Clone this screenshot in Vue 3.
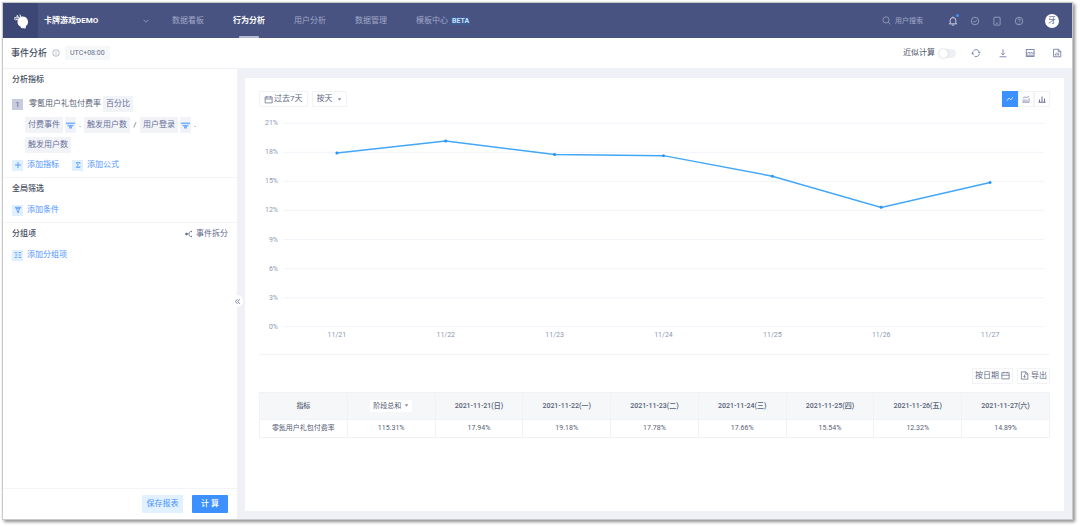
<script setup>
import { ref } from 'vue'

const navItems = [
  { name: '数据看板' },
  { name: '行为分析', active: true },
  { name: '用户分析' },
  { name: '数据管理' },
  { name: '模板中心', badge: 'BETA' },
]
const days = [
  { label: '11/21', date: '2021-11-21(日)', value: 17.94 },
  { label: '11/22', date: '2021-11-22(一)', value: 19.18 },
  { label: '11/23', date: '2021-11-23(二)', value: 17.78 },
  { label: '11/24', date: '2021-11-24(三)', value: 17.66 },
  { label: '11/25', date: '2021-11-25(四)', value: 15.54 },
  { label: '11/26', date: '2021-11-26(五)', value: 12.32 },
  { label: '11/27', date: '2021-11-27(六)', value: 14.89 },
]
const ticks = [21, 18, 15, 12, 9, 6, 3, 0]
const tickY = (v) => 218 - v * 9.7
const points = days.map((d, i) => ({ ...d, x: 78 + i * 109, y: tickY(d.value) }))
const line = points.map((p) => `${p.x},${p.y}`).join(' ')
const approx = ref(false)
</script>

<template>
  <div class="frame">
    <header class="nav">
      <a class="logo" href="#" aria-label="首页">
        <svg viewBox="0 0 32 32" width="16" height="16">
          <path fill="#fff" d="M12 10c3-4 10-4 14-1 4 4 5 9 3 14l-3 3-1 5-9-1-1-3c-4-1-6-5-6-9 0-4 1-6 3-8z" />
          <path fill="none" stroke="#fff" stroke-width="2" d="M3 9l5 1M5 14l5-2M8 4l3 5M14 3l1 5M7 7l5 3M2 12l3 0" />
        </svg>
      </a>
      <label class="project">
        <select aria-label="项目"><option>卡牌游戏DEMO</option></select>
        <svg viewBox="0 0 10 10" width="6" height="6"><path d="M1 3l4 4 4-4" /></svg>
      </label>
      <nav class="menu">
        <a v-for="n in navItems" :key="n.name" href="#" :class="{ active: n.active }">
          {{ n.name }}<span v-if="n.badge" class="beta">{{ n.badge }}</span>
        </a>
      </nav>
      <div class="tools">
        <label class="search">
          <svg viewBox="0 0 16 16" width="9" height="9"><circle cx="7" cy="7" r="5.500" /><path d="M11 11l4 4" /></svg>
          <input type="text" placeholder="用户搜索" aria-label="用户搜索" />
        </label>
        <button class="bell" aria-label="通知">
          <svg viewBox="0 0 16 16" width="10" height="10"><path d="M1.500 12.500h13M3.500 12V7a4.500 4.500 0 0 1 9 0v5M6 14.500h4M8 1v1.500" /></svg>
          <i class="dot"></i>
        </button>
        <button aria-label="任务">
          <svg viewBox="0 0 16 16" width="10" height="10"><circle cx="8" cy="8" r="6" /><path d="M5 8l2.200 2.200L11.300 6" /></svg>
        </button>
        <button aria-label="设备">
          <svg viewBox="0 0 16 16" width="10" height="10"><rect x="3" y="2" width="10" height="12.500" rx="1" /><path d="M6.500 11.500h3" /></svg>
        </button>
        <button aria-label="帮助">
          <svg viewBox="0 0 16 16" width="10" height="10"><circle cx="8" cy="8" r="6" /><path d="M6 6.500a2 2 0 1 1 2.800 1.800q-.8.400-.8 1.200M8 10.800v1.200" /></svg>
        </button>
        <button class="avatar">牙</button>
      </div>
    </header>

    <div class="subbar">
      <h1>事件分析</h1>
      <svg class="info" viewBox="0 0 16 16" width="8" height="8"><circle cx="8" cy="8" r="6.500" /><path d="M8 7v4.500M8 4v1.500" /></svg>
      <span class="zone">UTC+08:00</span>
      <div class="actions">
        <label class="approx">近似计算<input v-model="approx" type="checkbox" /></label>
        <button aria-label="刷新">
          <svg viewBox="0 0 16 16" width="10" height="10"><path d="M4 4.200a5.500 5.500 0 0 1 9.400 3.300M13.400 9.500a5.500 5.500 0 0 1-8 3.600M3.500 11.300a5.500 5.500 0 0 1-.3-6M14.800 6.500l-1.400 1.700-1.700-1.200M1.200 9.500l1.300-1.700 1.600 1.200" /></svg>
        </button>
        <button aria-label="下载">
          <svg viewBox="0 0 16 16" width="10" height="10"><path d="M8 2v9M5.500 8.500L8 11l2.500-2.500M2.500 14h11" /></svg>
        </button>
        <button aria-label="代码">
          <svg viewBox="0 0 16 16" width="10" height="10"><rect x="2" y="2.500" width="12.500" height="11" /><path d="M2 8h3l1.500-1.500L8 9l1.500-2L11 8h3.500M2 11.500h12" /></svg>
        </button>
        <button aria-label="报表">
          <svg viewBox="0 0 16 16" width="10" height="10"><path d="M2.500 2h8L14 5.500V14H2.500zM10 2v4h4M5.500 12V9M8 12V7M10.500 12V8.500" /></svg>
        </button>
      </div>
    </div>

    <div class="body">
      <aside class="panel">
        <section>
          <h2>分析指标</h2>
          <div class="metric">
            <span class="index">1</span>
            <span class="name">零氪用户礼包付费率</span>
            <button class="tag">百分比</button>
          </div>
          <div class="formula">
            <button class="tag">付费事件</button>
            <button class="tag filter" aria-label="筛选付费事件"><svg viewBox="0 0 12 12" width="9" height="9"><path d="M0 2h12v2H0zM1 5h10L8 8v2H4V8z" /></svg></button>
            <span>.</span>
            <button class="tag">触发用户数</button>
            <span class="slash">/</span>
            <button class="tag">用户登录</button>
            <button class="tag filter" aria-label="筛选用户登录"><svg viewBox="0 0 12 12" width="9" height="9"><path d="M0 2h12v2H0zM1 5h10L8 8v2H4V8z" /></svg></button>
            <span>.</span>
            <button class="tag">触发用户数</button>
          </div>
          <div class="adds">
            <button class="add"><i><svg viewBox="0 0 12 12" width="8" height="8"><path d="M6 1.500v9M1.500 6h9" /></svg></i>添加指标</button>
            <button class="add"><i><svg viewBox="0 0 12 12" width="8" height="8"><path d="M9 4V2.500H3.500L6.500 6l-3 3.500H9V8" /></svg></i>添加公式</button>
          </div>
        </section>
        <section>
          <h2>全局筛选</h2>
          <div class="adds">
            <button class="add"><i><svg viewBox="0 0 12 12" width="8" height="8"><path d="M2 2h8L7 6.500V10L5 9V6.500zM3.500 4h5" /></svg></i>添加条件</button>
          </div>
        </section>
        <section>
          <div class="heading">
            <h2>分组项</h2>
            <button class="split">
              <svg viewBox="0 0 16 16" width="8" height="8"><circle class="node" cx="3" cy="8" r="2" /><path d="M5 8h3M14 3h-3Q8 3 8 8t3 5h3M13 1.500v3M13 11.500v3" /></svg>事件拆分
            </button>
          </div>
          <div class="adds">
            <button class="add"><i><svg viewBox="0 0 12 12" width="8" height="8"><path d="M1 2.500h4M7 2.500h4M2 6h3M7 6h3M1 9.500h4M7 9.500h4" /></svg></i>添加分组项</button>
          </div>
        </section>
        <footer>
          <button class="save">保存报表</button>
          <button class="run">计 算</button>
        </footer>
        <button class="collapse" aria-label="收起"><svg viewBox="0 0 12 12" width="7" height="7"><path d="M6 2L2.500 6 6 10M10 2L6.500 6 10 10" /></svg></button>
      </aside>

      <main>
        <div class="card">
          <div class="chart-bar">
            <button class="box">
              <svg viewBox="0 0 16 16" width="9" height="9"><path d="M2 3.500h12.500V14H2zM2 7h12.500M5 1.500v3.500M11.500 1.500v3.500" /></svg>过去7天
            </button>
            <label class="box pick">
              <select aria-label="时间粒度"><option>按天</option></select>
              <svg class="caret" viewBox="0 0 8 8" width="5" height="5"><path d="M1 2h6L4 6z" /></svg>
            </label>
            <div class="views">
              <button class="on" aria-label="折线图"><svg viewBox="0 0 16 16" width="8" height="8"><path d="M1.500 12L6 6l3.500 4L14 4" /></svg></button>
              <button aria-label="堆积图"><svg viewBox="0 0 16 16" width="8" height="8"><path d="M2 14V9M6 14V8M10 14V9M14 14V6M2 6l4-2 4 1 4-3M1 14.500h14" /></svg></button>
              <button aria-label="柱状图"><svg class="bars" viewBox="0 0 16 16" width="8" height="8"><path d="M3 14V9M8 14V3M13 14V7M1 14.500h14" /></svg></button>
            </div>
          </div>

          <svg class="chart" viewBox="0 0 792 232" role="img" aria-label="零氪用户礼包付费率">
            <g v-for="t in ticks" :key="t">
              <line class="grid" x1="24" x2="786" :y1="tickY(t)" :y2="tickY(t)" />
              <text x="19" :y="tickY(t) + 2" text-anchor="end">{{ t }}%</text>
            </g>
            <polyline :points="line" />
            <g v-for="p in points" :key="p.label">
              <circle :cx="p.x" :cy="p.y" r="1.500" />
              <text :x="p.x" y="228" text-anchor="middle">{{ p.label }}</text>
            </g>
          </svg>

          <div class="table-bar">
            <button class="box">
              按日期<svg viewBox="0 0 16 16" width="9" height="9"><path d="M1.500 3h13v11h-13zM1.500 7.500h13M5 1.500V4M11 1.500V4" /></svg>
            </button>
            <button class="box">
              <svg viewBox="0 0 16 16" width="9" height="9"><path d="M2.500 1.500h8L14 5v9.500H2.500zM10 2v3.500h4M8 6.500v5M6 9.500l2 2 2-2" /></svg>导出
            </button>
          </div>

          <table>
            <thead>
              <tr>
                <th>指标</th>
                <th>
                  <label class="pick total">
                    <select aria-label="汇总方式"><option>阶段总和</option></select>
                    <svg class="caret" viewBox="0 0 8 8" width="5" height="5"><path d="M1 2h6L4 6z" /></svg>
                  </label>
                </th>
                <th v-for="d in days" :key="d.date">{{ d.date }}</th>
              </tr>
            </thead>
            <tbody>
              <tr>
                <td>零氪用户礼包付费率</td>
                <td>115.31%</td>
                <td v-for="d in days" :key="d.date">{{ d.value }}%</td>
              </tr>
            </tbody>
          </table>
        </div>
      </main>
    </div>
  </div>
</template>

<style>
body {
  margin: 0;
  background: #fff;
}
</style>

<style scoped>
* {
  box-sizing: border-box;
}
.frame {
  display: flex;
  flex-direction: column;
  min-height: calc(100vh - 11px);
  margin: 3px 8px 8px 3px;
  font-family: Roboto, "Noto Sans CJK SC", sans-serif;
  font-size: 8px;
  line-height: 12px;
  color: #566075;
  background: #fff;
  box-shadow: 0 0 1px 1px #c9cacc, 2px 2px 3px 1px #8c8c8c;
}
button,
input,
select {
  margin: 0;
  padding: 0;
  border: 0;
  background: none;
  color: inherit;
  font: inherit;
  appearance: none;
  outline: none;
}
button {
  display: inline-flex;
  align-items: center;
  justify-content: center;
  white-space: nowrap;
}
a {
  color: inherit;
  text-decoration: none;
}
svg {
  display: block;
  flex: none;
  fill: none;
  stroke: currentColor;
  stroke-width: 1.3;
}
h1,
h2 {
  margin: 0;
  font-weight: 500;
  color: #434c5e;
}
h1 {
  font-size: 9px;
}
h2 {
  font-size: 8px;
}

.nav {
  display: flex;
  align-items: center;
  height: 35px;
  background: #485382;
  color: #a1a8c5;
}
.logo {
  display: flex;
  align-items: center;
  justify-content: center;
  width: 35px;
  height: 35px;
  background: #3d4776;
}
.logo svg {
  stroke: none;
}
.project {
  display: flex;
  align-items: center;
  justify-content: space-between;
  width: 105px;
  margin: 0 23px 0 6px;
}
.project select {
  color: #fff;
  font-weight: 700;
}
.menu {
  display: flex;
  gap: 29px;
  height: 35px;
}
.menu a {
  position: relative;
  display: flex;
  align-items: center;
  white-space: nowrap;
}
.menu .active {
  color: #fff;
  font-weight: 700;
}
.menu .active::after {
  content: "";
  position: absolute;
  bottom: 0;
  left: 6px;
  right: 6px;
  height: 2px;
  border-radius: 1px 1px 0 0;
  background: #b6bad0;
}
.beta {
  margin-left: 3px;
  padding: 0 1px;
  font-size: 7px;
  line-height: 8px;
  font-weight: 700;
  color: #c3e2ff;
  background: #3f5b93;
}
.tools {
  display: flex;
  align-items: center;
  gap: 12px;
  margin-left: auto;
  padding-right: 13px;
}
.search {
  display: flex;
  align-items: center;
  gap: 4px;
}
.search input {
  width: 41px;
  font-size: 7px;
}
.search input::placeholder {
  color: #a1a8c5;
  opacity: 1;
}
.bell {
  position: relative;
  color: #e3e6f2;
}
.dot {
  position: absolute;
  top: -2px;
  right: -1px;
  width: 3px;
  height: 3px;
  border-radius: 50%;
  background: #3d90ff;
}
.avatar {
  width: 14px;
  height: 14px;
  margin-left: 9px;
  border-radius: 50%;
  background: #fff;
  color: #485382;
}

.subbar {
  display: flex;
  align-items: center;
  height: 31px;
  padding: 0 10px 0 8px;
  border-bottom: 1px solid #f0f1f4;
}
.info {
  margin: 0 5px;
  color: #8d95ad;
}
.zone {
  padding: 1px 5px;
  border-radius: 1px;
  background: #f6f7f9;
  font-size: 7px;
  color: #67708a;
}
.actions {
  display: flex;
  align-items: center;
  gap: 17px;
  margin-left: auto;
  color: #69729c;
}
.approx {
  display: flex;
  align-items: center;
  gap: 4px;
  margin-right: -2px;
  color: #4d566b;
}
.approx input {
  display: flex;
  width: 17px;
  height: 9px;
  border-radius: 5px;
  background: #eef0f4;
}
.approx input::before {
  content: "";
  width: 9px;
  height: 9px;
  border-radius: 50%;
  background: #fff;
  box-shadow: 0 0 2px #b5b9c4;
}
.approx input:checked {
  justify-content: flex-end;
  background: #3d90ff;
}

.body {
  display: flex;
  flex: 1;
}
.panel {
  position: relative;
  display: flex;
  flex-direction: column;
  flex: none;
  width: 234px;
}
section {
  padding: 5px 9px 6px;
}
section + section {
  border-top: 1px solid #f3f4f7;
}
.metric {
  display: flex;
  align-items: center;
  margin-top: 10px;
}
.index {
  width: 11px;
  height: 11px;
  margin-right: 6px;
  line-height: 11px;
  text-align: center;
  background: #c7cbde;
  color: #5d668c;
}
.name {
  margin-right: 2px;
}
.tag {
  height: 16px;
  padding: 0 3px;
  border-radius: 1px;
  background: #f2f3f7;
  color: #67709a;
}
.formula {
  display: flex;
  flex-wrap: wrap;
  align-items: center;
  gap: 4px 2px;
  margin: 5px 0 0 13px;
}
.formula span {
  width: 4px;
  text-align: center;
}
.formula .slash {
  width: 6px;
}
.filter {
  padding: 0 1px;
}
.filter path {
  fill: #7ab4ff;
  stroke: none;
}
.adds {
  display: flex;
  gap: 13px;
  margin-top: 9px;
}
.formula + .adds {
  margin-top: 6px;
}
.add {
  gap: 4px;
  color: #4b93ff;
}
.add i {
  display: flex;
  align-items: center;
  justify-content: center;
  width: 11px;
  height: 11px;
  background: #e0f0ff;
}
.heading {
  display: flex;
  justify-content: space-between;
}
.split {
  gap: 3px;
  color: #5f688f;
}
.node {
  fill: currentColor;
}
footer {
  display: flex;
  align-items: center;
  justify-content: flex-end;
  gap: 9px;
  height: 31px;
  margin-top: auto;
  padding-right: 9px;
  border-top: 1px solid #f3f4f7;
}
footer button {
  height: 18px;
  border-radius: 1px;
}
.save {
  width: 41px;
  background: #e2f1ff;
  color: #4b93ff;
}
.run {
  width: 36px;
  background: #3d90ff;
  color: #fff;
  font-weight: 500;
}
.collapse {
  position: absolute;
  top: 226px;
  right: -6px;
  width: 12px;
  height: 12px;
  border-radius: 50%;
  background: #fff;
  color: #5f688f;
}

main {
  display: flex;
  flex: 1;
  min-width: 0;
  padding: 9px 8px 8px;
  background: #eff1f6;
}
.card {
  flex: 1;
  min-width: 0;
  padding: 13px 14px;
  background: #fff;
}
.chart-bar,
.table-bar {
  display: flex;
  gap: 4px;
}
.box {
  display: flex;
  align-items: center;
  gap: 1px;
  height: 16px;
  padding: 0 4px;
  border: 1px solid #f2f3f6;
  border-radius: 1px;
  color: #606984;
}
.pick select {
  margin-right: 3px;
}
.caret {
  fill: #8a91a6;
  stroke: none;
}
.views {
  display: flex;
  margin-left: auto;
}
.views button {
  width: 16px;
  height: 16px;
  border: 1px solid #f2f3f6;
  color: #69729c;
}
.views .on {
  border-color: #3d90ff;
  background: #3d90ff;
  color: #fff;
}
.bars {
  stroke-width: 2;
}
.chart {
  width: 100%;
  height: auto;
  margin-top: 2px;
}
.chart text {
  font-size: 7px;
  fill: #8c98b3;
  stroke: none;
}
.chart .grid {
  stroke: #f2f4fa;
  stroke-width: 1;
}
.chart polyline {
  stroke: #42a7f8;
  stroke-width: 1.5;
}
.chart circle {
  fill: #2b95ee;
  stroke: none;
}
.table-bar {
  justify-content: flex-end;
  margin-top: 13px;
  padding: 13px 0 8px;
  border-top: 1px solid #f2f3f6;
}
.table-bar .box {
  gap: 2px;
  padding: 0 2px;
}
table {
  width: 100%;
  border-collapse: collapse;
  table-layout: fixed;
  font-size: 7px;
}
th,
td {
  padding: 0;
  border: 1px solid #f0f2f5;
  text-align: center;
  white-space: nowrap;
}
th {
  height: 27px;
  background: #f5f7f9;
  font-weight: 500;
}
td {
  height: 18px;
}
.total {
  display: inline-flex;
  align-items: center;
  height: 12px;
  padding: 0 3px;
  background: #fff;
  font-weight: 400;
}
</style>
